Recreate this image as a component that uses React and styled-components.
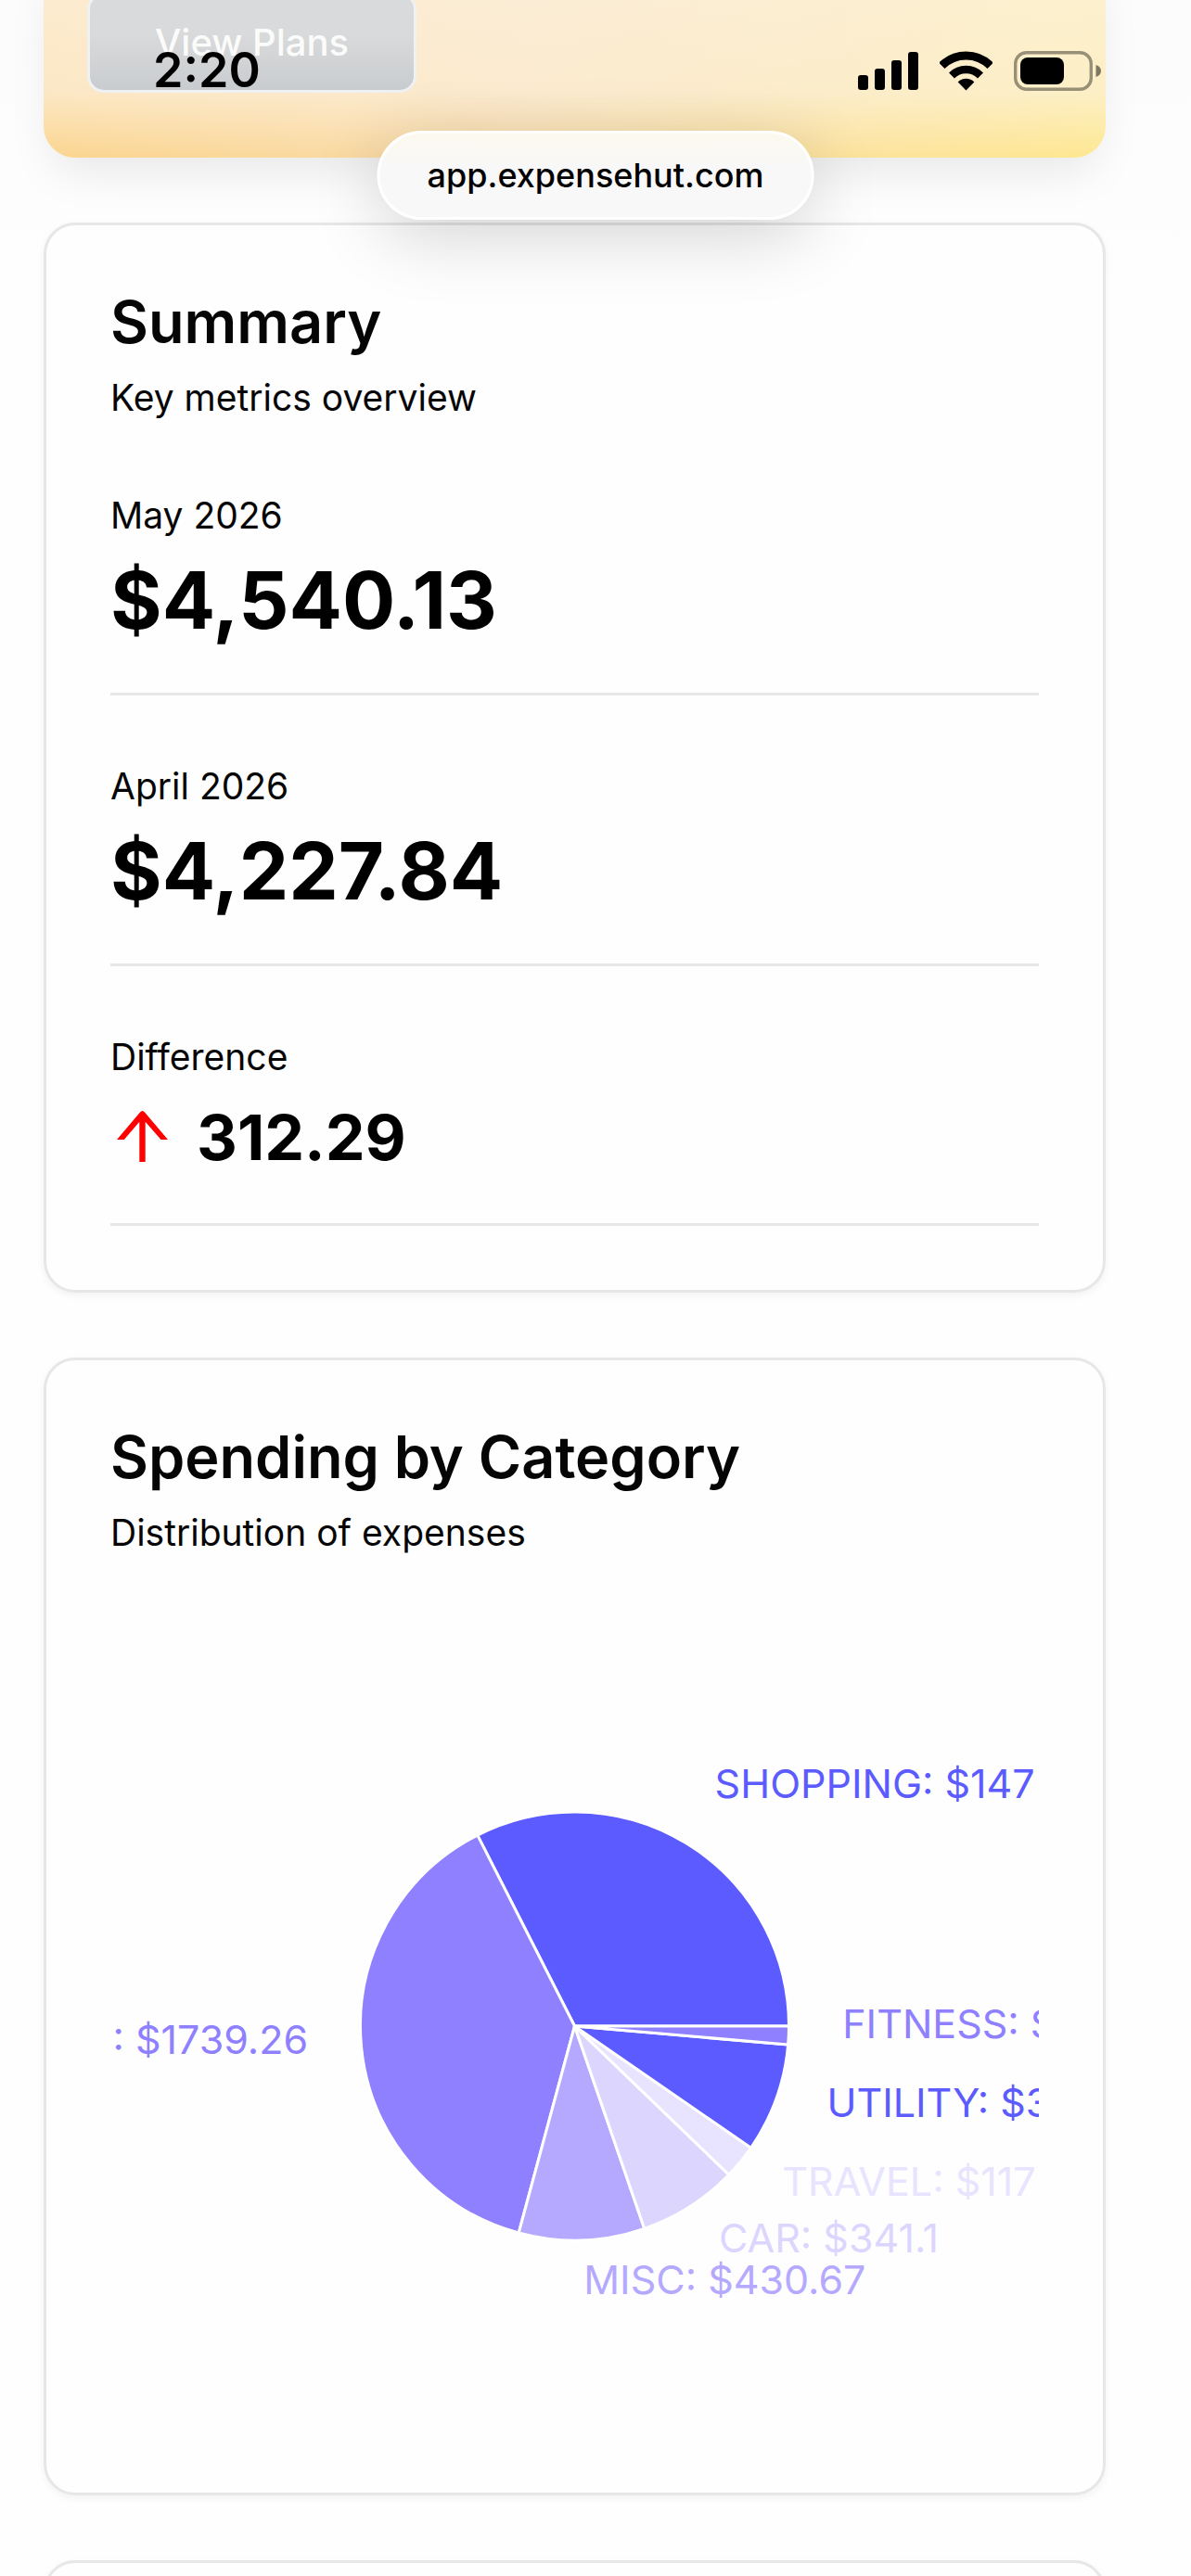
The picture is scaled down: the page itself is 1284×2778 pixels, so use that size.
import React from "react";
import styled, { createGlobalStyle } from "styled-components";

const slices = [
  { label: "SHOPPING: $147", value: 1475, color: "#5b5bff" },
  { label: ": $1739.26", value: 1739.26, color: "#8e80ff" },
  { label: "MISC: $430.67", value: 430.67, color: "#b5a9ff" },
  { label: "CAR: $341.1", value: 341.1, color: "#dcd6ff" },
  { label: "TRAVEL: $117", value: 117.5, color: "#e8e3ff" },
  { label: "UTILITY: $3", value: 374, color: "#5b5bff" },
  { label: "FITNESS: $", value: 62.6, color: "#8e80ff" }
];

const RADIUS = 231;
const LABEL_RADIUS = 289;

const point = (angle, radius) => [
  radius * Math.cos(angle),
  -radius * Math.sin(angle)
];

const SpendingPie = () => {
  const total = slices.reduce((sum, slice) => sum + slice.value, 0);
  let angle = 0;
  const sectors = slices.map(slice => {
    const start = angle;
    angle += (slice.value / total) * Math.PI * 2;
    return { ...slice, start, end: angle, mid: (start + angle) / 2 };
  });

  return (
    <Chart role="img" aria-label="Spending by Category">
      <svg x="50%" y="50%" overflow="visible">
        {sectors.map(({ label, color, start, end }) => {
          const [x1, y1] = point(start, RADIUS);
          const [x2, y2] = point(end, RADIUS);
          const large = end - start > Math.PI ? 1 : 0;
          return (
            <Slice
              key={label}
              fill={color}
              d={`M0 0L${x1} ${y1}A${RADIUS} ${RADIUS} 0 ${large} 0 ${x2} ${y2}Z`}
            />
          );
        })}
        {sectors.map(({ label, color, mid }) => {
          const [x, y] = point(mid, LABEL_RADIUS);
          return (
            <SliceLabel
              key={label}
              x={x}
              y={y}
              fill={color}
              textAnchor={x < 0 ? "end" : "start"}
            >
              {label}
            </SliceLabel>
          );
        })}
      </svg>
    </Chart>
  );
};

const SignalIcon = () => (
  <svg width="65" height="43" viewBox="0 0 65 43" aria-hidden="true">
    <rect x="0" y="26" width="11" height="16" rx="3" />
    <rect x="18" y="19" width="11" height="23" rx="3" />
    <rect x="36" y="10" width="11" height="32" rx="3" />
    <rect x="54" y="1" width="11" height="41" rx="3" />
  </svg>
);

const WifiIcon = () => (
  <svg width="57" height="43" viewBox="0 0 57 43" aria-hidden="true">
    <g fill="none" stroke="#000">
      <path d="M2.3 15.8A37 37 0 0 1 54.7 15.8" strokeWidth="9" />
      <path d="M13 26.5A21.9 21.9 0 0 1 44 26.5" strokeWidth="8.4" />
    </g>
    <path d="M28.5 42.4L19.7 33.4A12.6 12.6 0 0 1 37.3 33.4Z" />
  </svg>
);

const BatteryIcon = () => (
  <svg width="94" height="43" viewBox="0 0 94 43" aria-hidden="true">
    <rect
      x="1.7"
      y="1.7"
      width="81.6"
      height="39.6"
      rx="12"
      fill="none"
      stroke="#000"
      strokeOpacity="0.4"
      strokeWidth="3.4"
    />
    <rect x="7" y="7" width="47" height="29" rx="8" />
    <path d="M88.500 15C92 16 94 18.500 94 21.500S92 27 88.500 28Z" fillOpacity="0.5" />
  </svg>
);

const ArrowUpIcon = () => (
  <svg width="70" height="70" viewBox="0 0 70 70" fill="#ff0000" aria-hidden="true">
    <path d="M7 38L32 8.500Q34.500 5.500 37 8.500L62 38H54.500L37.700 18.800V62H31.300V18.800L14.800 38Z" />
  </svg>
);

const App = () => {
  return (
    <Page>
      <GlobalStyle />
      <StatusBar>
        <Time>2:20</Time>
        <StatusIcons>
          <SignalIcon />
          <WifiIcon />
          <BatteryIcon />
        </StatusIcons>
      </StatusBar>
      <AddressBar type="button">app.expensehut.com</AddressBar>

      <Content>
        <Banner>
          <PlansButton type="button">View Plans</PlansButton>
        </Banner>

        <Card>
          <CardHeader>
            <h2>Summary</h2>
            <p>Key metrics overview</p>
          </CardHeader>
          <Metrics>
            <Metric>
              <dt>May 2026</dt>
              <Amount>$4,540.13</Amount>
            </Metric>
            <Metric>
              <dt>April 2026</dt>
              <Amount>$4,227.84</Amount>
            </Metric>
            <Metric>
              <dt>Difference</dt>
              <Amount $small>
                <ArrowUpIcon />
                312.29
              </Amount>
            </Metric>
          </Metrics>
        </Card>

        <Card>
          <CardHeader>
            <h2>Spending by Category</h2>
            <p>Distribution of expenses</p>
          </CardHeader>
          <SpendingPie />
        </Card>

        <Card />
      </Content>
    </Page>
  );
};

const GlobalStyle = createGlobalStyle`
  * {
    box-sizing: border-box;
  }
  body {
    margin: 0;
    background: #fefefe;
    color: #050505;
    font-family: Inter, "Liberation Sans", sans-serif;
  }
  button {
    font-family: inherit;
  }
`;

const Page = styled.div`
  position: relative;
  height: 100vh;
  overflow: hidden;
  background: linear-gradient(#fcfcfc, #fefefe 320px);
`;

const StatusBar = styled.header`
  position: absolute;
  top: 0;
  left: 0;
  right: 0;
  z-index: 2;
  display: flex;
  align-items: center;
  justify-content: space-between;
  padding: 44px 97px 0 165px;
`;

const Time = styled.time`
  font-size: 52px;
  line-height: 64px;
  font-weight: 600;
  color: #000;
`;

const StatusIcons = styled.div`
  display: flex;
  gap: 23px;
`;

const AddressBar = styled.button`
  position: absolute;
  top: 141px;
  left: 50%;
  z-index: 2;
  transform: translateX(-50%);
  padding: 0 51px;
  border: 3px solid #fff;
  border-radius: 48px;
  background: linear-gradient(#fcf9ee, #f8f8f8 36px);
  box-shadow: 0 18px 75px rgba(0, 0, 0, 0.17);
  color: #000;
  font-size: 36px;
  line-height: 90px;
  font-weight: 500;
`;

const Content = styled.main`
  display: flex;
  flex-direction: column;
  gap: 70px;
  padding: 0 92px 0 47px;
`;

const Banner = styled.section`
  margin-top: -40px;
  padding: 32px 47px 70px;
  border-radius: 0 0 34px 34px;
  background: linear-gradient(
      rgba(252, 244, 232, 0.7) 40px,
      rgba(252, 244, 232, 0.6) 140px,
      rgba(252, 244, 232, 0)
    ),
    linear-gradient(to right, #fbd590, #fadcaa 45%, #fde891);
  box-shadow: 0 24px 50px -10px rgba(0, 0, 0, 0.09);
`;

const PlansButton = styled.button`
  display: block;
  padding: 0 70px;
  border: 3px solid #eff1f3;
  border-radius: 18px;
  background: linear-gradient(#d9dadb 40%, #c9cccf);
  color: #fbfbfa;
  font-size: 40px;
  line-height: 102px;
  font-weight: 500;
`;

const Card = styled.section`
  padding: 69px;
  border: 3px solid #e6e7e8;
  border-radius: 34px;
  background: #fefefe;
  box-shadow: 0 3px 8px rgba(0, 0, 0, 0.05);
`;

const CardHeader = styled.header`
  margin-bottom: 69px;
  h2 {
    margin: 0 0 18px;
    font-size: 63px;
    line-height: 70px;
    font-weight: 600;
  }
  p {
    margin: 0;
    font-size: 39px;
    line-height: 58px;
  }
`;

const Metrics = styled.dl`
  display: flex;
  flex-direction: column;
  gap: 69px;
  margin: 0;
`;

const Metric = styled.div`
  padding-bottom: 46px;
  border-bottom: 3px solid #e6e7e8;
  dt {
    margin-bottom: 10px;
    font-size: 39px;
    line-height: 58px;
  }
`;

const Amount = styled.dd`
  display: flex;
  align-items: center;
  gap: 23px;
  margin: 0;
  color: #000;
  font-size: ${props => (props.$small ? "68px" : "85px")};
  line-height: ${props => (props.$small ? "94px" : "106px")};
  font-weight: 700;
`;

const Chart = styled.svg`
  display: block;
  width: 100%;
  height: 868px;
  overflow: hidden;
`;

const Slice = styled.path`
  stroke: #fff;
  stroke-width: 3px;
  stroke-linejoin: round;
`;

const SliceLabel = styled.text`
  font-size: 43px;
`;

export default App;
